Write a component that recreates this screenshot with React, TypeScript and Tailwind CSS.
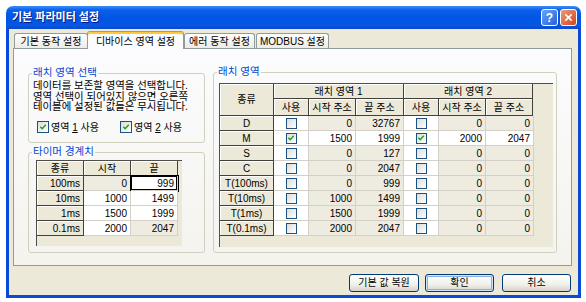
import React from 'react'

const FONT = "font-['Liberation_Sans','Noto_Sans_CJK_KR',sans-serif]"

function Check({ on, small }: { on?: boolean; small?: boolean }) {
  return (
    <span
      className={`${small ? 'h-[11px] w-[11px]' : 'h-[12px] w-[12px]'} box-border inline-flex shrink-0 items-center justify-center border border-[#1C5180] bg-[linear-gradient(135deg,#DCDCD7,#FFFFFF)]`}
    >
      {on && (
        <svg viewBox="0 0 9 9" className="h-[8px] w-[8px]">
          <path d="M1.5 4.2 L3.6 6.4 L7.6 2" fill="none" stroke="#21A121" strokeWidth="1.7" />
        </svg>
      )}
    </span>
  )
}

function Group({ title, className, children }: { title: string; className: string; children: React.ReactNode }) {
  return (
    <div className={`relative box-border rounded-[3px] border border-[#D0D0BF] ${className}`}>
      <span className="absolute left-[3px] top-[-8px] bg-[#FBFBF9] px-[1px] text-[10.5px] leading-[13px] text-[#0046D5]">
        {title}
      </span>
      {children}
    </div>
  )
}

const fixed =
  'box-border flex items-center justify-center border-b border-r border-b-[#404040] border-r-[#404040] bg-[#ECE9D8] shadow-[inset_1px_1px_0_#FFFFFF]'
const cell = 'box-border flex items-center justify-end border-b border-r border-[#D4D0C8] pr-[3px]'

const latch = [
  { k: 'D', a: [false, '0', '32767'], b: [false, '0', '0'] },
  { k: 'M', a: [true, '1500', '1999'], b: [true, '2000', '2047'] },
  { k: 'S', a: [false, '0', '127'], b: [false, '0', '0'] },
  { k: 'C', a: [false, '0', '2047'], b: [false, '0', '0'] },
  { k: 'T(100ms)', a: [false, '0', '999'], b: [false, '0', '0'] },
  { k: 'T(10ms)', a: [false, '1000', '1499'], b: [false, '0', '0'] },
  { k: 'T(1ms)', a: [false, '1500', '1999'], b: [false, '0', '0'] },
  { k: 'T(0.1ms)', a: [false, '2000', '2047'], b: [false, '0', '0'] },
] as const

const timers = [
  { k: '100ms', s: '0', e: '999', sOn: false, eOn: true, focus: true },
  { k: '10ms', s: '1000', e: '1499', sOn: true, eOn: true },
  { k: '1ms', s: '1500', e: '1999', sOn: true, eOn: true },
  { k: '0.1ms', s: '2000', e: '2047', sOn: true, eOn: false },
]

function LatchArea({ v }: { v: readonly [boolean, string, string] }) {
  const bg = v[0] ? 'bg-white' : 'bg-[#EEECE1]'
  return (
    <>
      <div className="box-border flex h-[15px] w-[35px] items-center justify-center border-b border-r border-[#D4D0C8] bg-white">
        <Check on={v[0]} small />
      </div>
      <div className={`${cell} h-[15px] w-[47px] ${bg}`}>{v[1]}</div>
      <div className={`${cell} h-[15px] w-[48px] ${bg}`}>{v[2]}</div>
    </>
  )
}

function Tab({ label, active, className }: { label: string; active?: boolean; className: string }) {
  if (active)
    return (
      <div
        className={`relative z-10 -mb-px box-border flex h-[18px] items-center justify-center rounded-t-[3px] border border-b-0 border-[#919B9C] border-t-[#E68B2C] bg-[#FCFCFE] pt-[1px] shadow-[inset_0_2px_0_#FFC83C] ${className}`}
      >
        {label}
      </div>
    )
  return (
    <div
      className={`box-border flex h-[15px] items-center justify-center rounded-t-[3px] border border-b-0 border-[#919B9C] bg-[linear-gradient(#FFFFFF,#ECEBE6)] ${className}`}
    >
      {label}
    </div>
  )
}

export default function App() {
  return (
    <div className={`h-[302px] w-[586px] overflow-hidden bg-white pl-[6px] pt-[6px] text-[10px] leading-[15px] text-black ${FONT}`}>
      <div className="flex h-[292px] w-[575px] flex-col overflow-hidden rounded-t-[7px]">
        {/* title bar */}
        <div className="flex h-[23px] shrink-0 items-center bg-[linear-gradient(to_bottom,#3C8FF8_0%,#0A5FEA_18%,#0055E3_50%,#0657E2_85%,#0A48CC_100%)] pl-[6px] pr-[4px]">
          <span className="text-[11px] font-bold text-white [text-shadow:1px_1px_0_#0A1883]">기본 파라미터 설정</span>
          <div className="ml-auto flex gap-[2px]">
            <div className="box-border flex h-[17px] w-[17px] items-center justify-center rounded-[3px] border border-white bg-[linear-gradient(135deg,#6AA2F7,#2563DB)] text-[12px] font-bold leading-none text-white">
              ?
            </div>
            <div className="box-border flex h-[17px] w-[17px] items-center justify-center rounded-[3px] border border-white bg-[linear-gradient(135deg,#EE9A7A,#D2461B)]">
              <svg viewBox="0 0 10 10" className="h-[9px] w-[9px]">
                <path d="M1.5 1.5 L8.5 8.5 M8.5 1.5 L1.5 8.5" stroke="#FFFFFF" strokeWidth="1.8" />
              </svg>
            </div>
          </div>
        </div>

        {/* body */}
        <div className="flex flex-1 flex-col border-x-[3px] border-b-[3px] border-[#0A4AD8] bg-[#ECE9D8] pl-[4px] pt-[2px]">
          <div className="flex h-[17px] items-end">
            <Tab label="기본 동작 설정" className="ml-[1px] w-[74px]" />
            <Tab label="디바이스 영역 설정" active className="-ml-[1px] w-[97px]" />
            <Tab label="에러 동작 설정" className="w-[71px]" />
            <Tab label="MODBUS 설정" className="ml-[1px] w-[73px]" />
          </div>

          <div className="box-border flex h-[218px] w-[559px] items-start border border-[#919B9C] bg-[linear-gradient(#FCFCFE,#F4F3EE)] pl-[14px] pt-[24px]">
            {/* left column */}
            <div className="flex w-[177px] flex-col">
              <Group title="래치 영역 선택" className="h-[70px]">
                <div className="whitespace-nowrap pl-[4px] pt-[7px] text-[10.4px] leading-[10.5px]">
                  데이터를 보존할 영역을 선택합니다.
                  <br />
                  영역 선택이 되어있지 않으면 오른쪽
                  <br />
                  테이블에 설정된 값들은 무시됩니다.
                </div>
                <div className="mt-[7px] flex items-center pl-[8px]">
                  <Check on />
                  <span className="ml-[2px]">
                    영역 <u>1</u> 사용
                  </span>
                  <span className="ml-[21px]">
                    <Check on />
                  </span>
                  <span className="ml-[2px]">
                    영역 <u>2</u> 사용
                  </span>
                </div>
              </Group>

              <Group title="타이머 경계치" className="mt-[9px] h-[101px]">
                <div className="ml-[7px] mt-[7px] box-border h-[86px] w-[146px] border-l border-t border-[#4E4E4E] bg-[#ECE9D8]">
                  <div className="flex">
                    <div className={`${fixed} h-[15px] w-[47px]`}>종류</div>
                    <div className={`${fixed} h-[15px] w-[47px]`}>시작</div>
                    <div className={`${fixed} h-[15px] w-[47px]`}>끝</div>
                  </div>
                  {timers.map((t) => (
                    <div key={t.k} className="flex">
                      <div className={`${fixed} h-[15px] w-[47px] !justify-end pr-[3px]`}>{t.k}</div>
                      <div className={`${cell} h-[15px] w-[47px] ${t.sOn ? 'bg-white' : 'bg-[#EEECE1]'}`}>{t.s}</div>
                      <div
                        className={`${cell} h-[15px] w-[47px] ${t.eOn ? 'bg-white' : 'bg-[#EEECE1]'} ${
                          t.focus ? 'shadow-[inset_0_0_0_1px_#000000] outline outline-1 outline-[#000000]' : ''
                        }`}
                      >
                        {t.e}
                      </div>
                    </div>
                  ))}
                </div>
              </Group>
            </div>

            {/* right group */}
            <Group title="래치 영역" className="-mt-[1px] ml-[8px] h-[181px] w-[344px]">
              <div className="ml-[5px] mt-[10px] box-border h-[164px] w-[334px] border-l border-t border-[#4E4E4E] bg-[#ECE9D8]">
                <div className="flex">
                  <div className={`${fixed} h-[32px] w-[54px]`}>종류</div>
                  <div className="flex flex-col">
                    <div className={`${fixed} h-[15px] w-[130px]`}>래치 영역 1</div>
                    <div className="flex">
                      <div className={`${fixed} h-[17px] w-[35px]`}>사용</div>
                      <div className={`${fixed} h-[17px] w-[47px]`}>시작 주소</div>
                      <div className={`${fixed} h-[17px] w-[48px]`}>끝 주소</div>
                    </div>
                  </div>
                  <div className="flex flex-col">
                    <div className={`${fixed} h-[15px] w-[129px]`}>래치 영역 2</div>
                    <div className="flex">
                      <div className={`${fixed} h-[17px] w-[35px]`}>사용</div>
                      <div className={`${fixed} h-[17px] w-[47px]`}>시작 주소</div>
                      <div className={`${fixed} h-[17px] w-[47px]`}>끝 주소</div>
                    </div>
                  </div>
                </div>
                {latch.map((r) => (
                  <div key={r.k} className="flex">
                    <div className={`${fixed} h-[15px] w-[54px]`}>{r.k}</div>
                    <LatchArea v={r.a} />
                    <LatchArea v={r.b} />
                  </div>
                ))}
              </div>
            </Group>
          </div>

          {/* buttons */}
          <div className="mt-[8px] flex justify-end pr-[7px]">
            <button className="box-border h-[18px] w-[70px] rounded-[3px] border border-[#003C74] bg-[linear-gradient(#FFFFFF,#F0F0EA_60%,#D8D2C6)] text-[10px] leading-none">
              기본 값 복원
            </button>
            <button className="ml-[6px] box-border h-[18px] w-[69px] rounded-[3px] border border-[#003C74] bg-[linear-gradient(#FFFFFF,#F0F0EA_60%,#D8D2C6)] text-[10px] leading-none shadow-[inset_0_0_0_1px_#CEE7FF,inset_0_0_0_2px_#89ADE4]">
              확인
            </button>
            <button className="ml-[8px] box-border h-[18px] w-[69px] rounded-[3px] border border-[#003C74] bg-[linear-gradient(#FFFFFF,#F0F0EA_60%,#D8D2C6)] text-[10px] leading-none">
              취소
            </button>
          </div>
        </div>
      </div>
    </div>
  )
}
